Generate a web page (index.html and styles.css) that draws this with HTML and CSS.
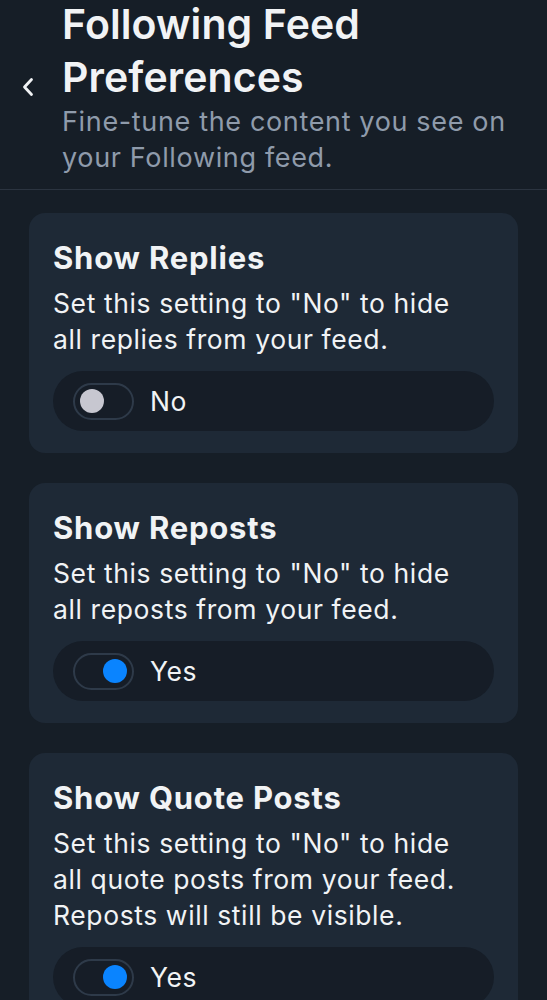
FILE: index.html
```html
<!DOCTYPE html>
<html lang="en">
<head>
<meta charset="utf-8">
<link rel="stylesheet" href="styles.css">
</head>
<body>
<div class="page">
  <header class="header">
    <button class="back" aria-label="Back">
      <svg width="14" height="20" viewBox="0 0 14 20"><path d="M10.5 2.5 L3.5 10 L10.5 17.5" fill="none" stroke="#f1f3f5" stroke-width="2.8" stroke-linecap="round" stroke-linejoin="round"/></svg>
    </button>
    <div class="head-text">
      <h1 class="title">Following Feed Preferences</h1>
      <p class="subtitle">Fine-tune the content you see on your Following feed.</p>
    </div>
  </header>
  <main class="list">
    <section class="card">
      <h2 class="card-title">Show Replies</h2>
      <p class="card-desc">Set this setting to "No" to hide all replies from your feed.</p>
      <div class="toggle-row">
        <span class="switch"><span class="knob"></span></span>
        <span class="toggle-label">No</span>
      </div>
    </section>
    <section class="card">
      <h2 class="card-title">Show Reposts</h2>
      <p class="card-desc">Set this setting to "No" to hide all reposts from your feed.</p>
      <div class="toggle-row">
        <span class="switch on"><span class="knob"></span></span>
        <span class="toggle-label">Yes</span>
      </div>
    </section>
    <section class="card">
      <h2 class="card-title">Show Quote Posts</h2>
      <p class="card-desc">Set this setting to "No" to hide all quote posts from your feed. Reposts will still be visible.</p>
      <div class="toggle-row">
        <span class="switch on"><span class="knob"></span></span>
        <span class="toggle-label">Yes</span>
      </div>
    </section>
  </main>
</div>
</body>
</html>
```

FILE: styles.css
```css
* { box-sizing: border-box; }
html, body { margin: 0; padding: 0; }
body {
  background: #161e27;
  color: #f1f3f5;
  font-family: Inter, "Noto Sans", sans-serif;
  width: 547px;
  height: 1000px;
  overflow: hidden;
}
.page { display: flex; flex-direction: column; }
.header {
  display: flex;
  align-items: center;
  margin-top: -2px;
  padding: 0 20px 13px 21px;
  border-bottom: 1px solid #2b3440;
}
.back {
  background: none;
  border: 0;
  padding: 0;
  width: 41px;
  display: flex;
  align-items: center;
  justify-content: flex-start;
  flex: none;
}
.head-text { display: flex; flex-direction: column; }
.title {
  margin: 0;
  font-size: 41px;
  line-height: 53px;
  font-weight: 600;
  letter-spacing: 0.1px;
  color: #f1f3f5;
}
.subtitle {
  margin: 0;
  font-size: 27px;
  line-height: 36px;
  letter-spacing: 0.65px;
  color: #8f9bab;
  font-weight: 400;
}
.list {
  display: flex;
  flex-direction: column;
  gap: 30px;
  padding: 23px 29px 0 29px;
}
.card {
  background: #1e2936;
  border-radius: 16px;
  padding: 26px 24px 22px 24px;
  display: flex;
  flex-direction: column;
}
.card-title {
  margin: 0;
  font-size: 31px;
  line-height: 38px;
  font-weight: 700;
  letter-spacing: 0.8px;
  color: #f1f3f5;
}
.card-desc {
  margin: 8px 0 0 0;
  padding-right: 14px;
  font-size: 26.5px;
  line-height: 36px;
  letter-spacing: 0.6px;
  color: #f1f3f5;
  font-weight: 400;
}
.toggle-row {
  margin-top: 14px;
  height: 60px;
  border-radius: 30px;
  background: #161d27;
  display: flex;
  align-items: center;
  padding-left: 20px;
  gap: 16px;
}
.switch {
  width: 61px;
  height: 37px;
  border: 2px solid #2e3a49;
  border-radius: 19px;
  display: flex;
  align-items: center;
  padding: 0 5px;
  flex: none;
}
.knob {
  width: 24px;
  height: 24px;
  border-radius: 50%;
  background: #c7c7d0;
}
.switch.on { justify-content: flex-end; }
.switch.on .knob { background: #0a84ff; }
.toggle-label {
  font-size: 26.5px;
  letter-spacing: 0.5px;
  color: #f1f3f5;
}
```
